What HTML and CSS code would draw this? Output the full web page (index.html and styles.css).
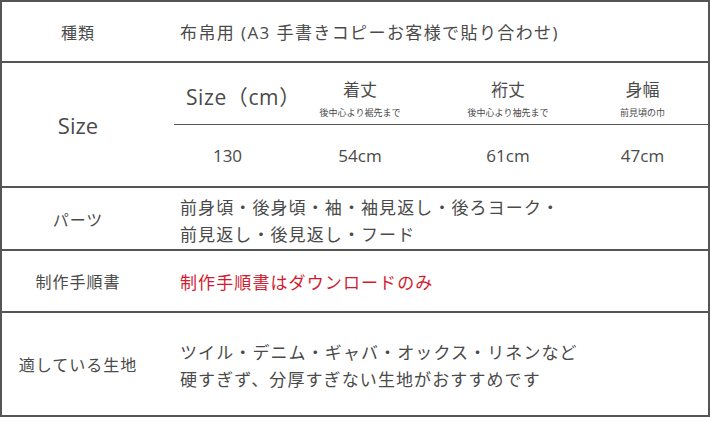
FILE: index.html
```html
<!DOCTYPE html>
<html lang="ja">
<head>
<meta charset="utf-8">
<link rel="stylesheet" href="styles.css">
</head>
<body>
<div class="spec">
  <div class="row r1">
    <div class="label">種類</div>
    <div class="value wide">布帛用 (A3 手書きコピーお客様で貼り合わせ)</div>
  </div>
  <div class="row r2">
    <div class="label size-label">Size</div>
    <div class="size-table">
      <div class="head first"><span class="size-cm">Size（cm）</span></div>
      <div class="head"><span class="h-main">着丈</span><span class="h-sub">後中心より裾先まで</span></div>
      <div class="head"><span class="h-main">裄丈</span><span class="h-sub">後中心より袖先まで</span></div>
      <div class="head"><span class="h-main">身幅</span><span class="h-sub">前見頃の巾</span></div>
      <div class="cell">130</div>
      <div class="cell">54cm</div>
      <div class="cell">61cm</div>
      <div class="cell">47cm</div>
    </div>
  </div>
  <div class="row r3">
    <div class="label">パーツ</div>
    <div class="value multi">前身頃・後身頃・袖・袖見返し・後ろヨーク・<br>前見返し・後見返し・フード</div>
  </div>
  <div class="row r4">
    <div class="label">制作手順書</div>
    <div class="value red">制作手順書はダウンロードのみ</div>
  </div>
  <div class="row r5">
    <div class="label">適している生地</div>
    <div class="value multi">ツイル・デニム・ギャバ・オックス・リネンなど<br>硬すぎず、分厚すぎない生地がおすすめです</div>
  </div>
</div>
</body>
</html>
```
FILE: styles.css
```css
* { box-sizing: border-box; }
html, body { margin: 0; padding: 0; background: #fff; }
body {
  font-family: "Open Sans", "Noto Sans CJK JP", sans-serif;
  color: #4a4a4a;
}
.spec {
  width: 710px;
  border: 2px solid #555;
}
.row {
  display: grid;
  grid-template-columns: 152px 1fr;
  border-bottom: 2px solid #555;
}
.row:last-child { border-bottom: none; }
.r1 { height: 61px; }
.r2 { height: 125px; }
.r3 { height: 63px; }
.r4 { height: 62px; }
.r5 { height: 102px; }
.label {
  display: flex;
  align-items: center;
  justify-content: center;
  font-size: 16px;
  letter-spacing: 1px;
}
.size-label { font-size: 22px; letter-spacing: 0; }
.value {
  display: flex;
  align-items: center;
  padding-left: 26px;
  font-size: 17px;
  letter-spacing: 1.1px;
}
.value.wide { letter-spacing: 1.4px; }
.multi { line-height: 27px; padding-top: 4px; }
.red { color: #d31a2e; }
.size-table {
  margin-left: 20px;
  display: grid;
  grid-template-columns: 107px 158px 138px 1fr;
  grid-template-rows: 62px 1fr;
}
.head {
  border-bottom: 1px solid #555;
  display: flex;
  flex-direction: column;
  align-items: center;
  padding-top: 15px;
}
.head.first {
  align-items: flex-start;
  padding-left: 12px;
  padding-top: 18px;
}
.size-cm { font-size: 21px; white-space: nowrap; letter-spacing: 0.6px; }
.h-main { font-size: 17px; line-height: 24px; }
.h-sub { font-size: 9px; line-height: 14px; margin-top: 4px; }
.cell {
  display: flex;
  align-items: center;
  justify-content: center;
  font-size: 17px;
}
```
